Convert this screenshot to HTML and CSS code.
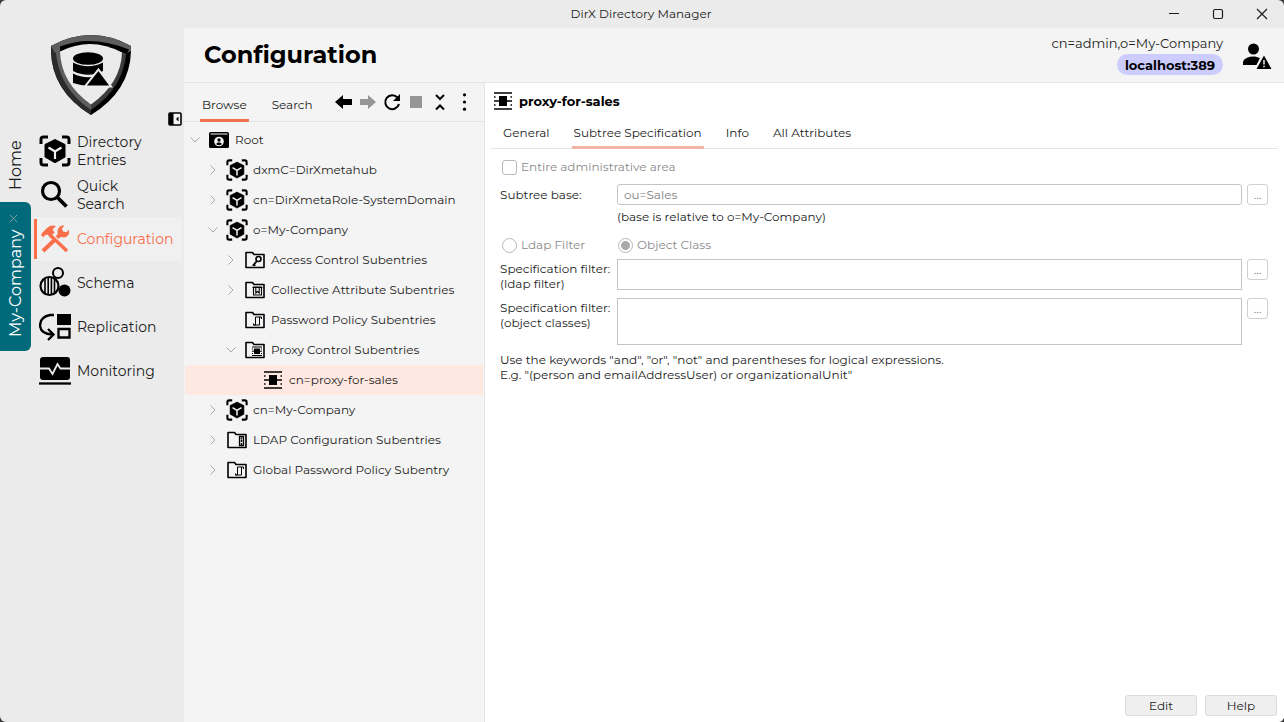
FILE: index.html
```html
<!DOCTYPE html>
<html lang="en">
<head>
<meta charset="utf-8">
<title>DirX Directory Manager</title>
<link rel="stylesheet" href="styles.css">
</head>
<body>
<svg class="sprite" aria-hidden="true">
  <symbol id="cube" viewBox="0 0 32 32">
    <path d="M2 9V4.500Q2 2 4.500 2H9M23 2h4.500Q30 2 30 4.500V9M30 23v4.500Q30 30 27.500 30H23M9 30H4.500Q2 30 2 27.500V23" fill="none" stroke="currentColor" stroke-width="3"/>
    <path d="M16 4.500 26 9.500V22L16 27.800 6 22V9.500z" fill="currentColor" stroke="currentColor" stroke-linejoin="round"/>
    <path d="M9.500 12.500l6.500 4 6.500-4M16 16.500V24" fill="none" stroke="#f2f2f2" stroke-width="2.200"/>
  </symbol>
  <symbol id="chev-right" viewBox="0 0 14 14"><path d="M4.500 2.500 9 7 4.500 11.500" fill="none" stroke="#aaa"/></symbol>
  <symbol id="chev-down" viewBox="0 0 14 14"><path d="M2.500 4.500 7 9 11.500 4.500" fill="none" stroke="#aaa"/></symbol>
  <symbol id="folder" viewBox="0 0 22 22"><path d="M2 3.500h6.500l1.500 2h10v13H2z" fill="none" stroke="currentColor" stroke-width="1.600" stroke-linejoin="round"/></symbol>
  <symbol id="folder-key" viewBox="0 0 22 22"><use href="#folder"/><circle cx="14.500" cy="10" r="2.500" fill="none" stroke="currentColor" stroke-width="1.600"/><path d="M13 12l-3.500 4 2 .5" fill="none" stroke="currentColor" stroke-width="1.800"/></symbol>
  <symbol id="folder-attr" viewBox="0 0 22 22"><use href="#folder"/><path d="M9.500 8h8v8h-8zM8.500 8.500h10M11.800 9v5l1.700-1.500 1.700 1.500V9" fill="none" stroke="currentColor" stroke-width="1.100"/></symbol>
  <symbol id="folder-policy" viewBox="0 0 22 22"><use href="#folder"/><path d="M17.500 10V8H11.500v8H9.500M15.500 8v8h-6v-1.500" fill="none" stroke="currentColor" stroke-width="1"/></symbol>
  <symbol id="folder-proxy" viewBox="0 0 22 22"><use href="#folder"/><path d="M8 8h10M8 16.500h10M8 12.200h10M8 10h1M17 10h1M8 14.500h1M17 14.500h1" stroke="currentColor" stroke-width="1"/><path d="M10 9.500h6v5.500h-6z" fill="currentColor"/></symbol>
  <symbol id="folder-ldap" viewBox="0 0 22 22"><use href="#folder"/><path d="M13.500 7.500h4v9h-4z" fill="none" stroke="currentColor" stroke-width="1.300"/><path d="M15.500 8.500v2M15.500 11v2M15.500 14v2" stroke="currentColor" stroke-width="1.500"/></symbol>
  <symbol id="root" viewBox="0 0 22 22"><rect x="1" y="3" width="20" height="16" rx="1.500" fill="currentColor"/><path d="M2.500 5h17" stroke="#f4f4f4" stroke-width="1.200"/><circle cx="11" cy="12.500" r="4.800" fill="#f4f4f4"/><circle cx="11" cy="11" r="1.700" fill="currentColor"/><path d="M8 15q3-3.500 6 0-3 2.500-6 0z" fill="currentColor"/></symbol>
  <symbol id="proxy" viewBox="0 0 18 18"><path d="M0 1h18M0 17h18M0 9h18" stroke="currentColor" stroke-width="1.600"/><path d="M0 5h1.500M16.500 5H18M0 13h1.500M16.500 13H18" stroke="currentColor" stroke-width="1.500"/><path d="M5 4h8v10H5z" fill="currentColor"/></symbol>
</svg>

<div class="window">
  <header class="titlebar">
    <span class="app-title">DirX Directory Manager</span>
    <div class="window-buttons">
      <button type="button" aria-label="Minimize"><svg viewBox="0 0 12 12"><path d="M1 5.500h10" stroke="currentColor"/></svg></button>
      <button type="button" aria-label="Maximize"><svg viewBox="0 0 12 12"><rect x="1.500" y="1.500" width="9" height="9" rx="1.500" fill="none" stroke="currentColor" stroke-width="1.200"/></svg></button>
      <button type="button" aria-label="Close"><svg viewBox="0 0 12 12"><path d="M1 1l10 10M11 1 1 11" stroke="currentColor" stroke-width="1.200"/></svg></button>
    </div>
  </header>

  <aside class="sidebar">
    <div class="brand">
      <svg class="logo" viewBox="0 0 80 80" role="img" aria-label="DirX">
        <path d="M0 11Q40-11 80 11V16Q79 56 40 80 1 56 0 16z" fill="#000"/>
        <path d="M0 11 6 9 40 74V80Q1 56 0 16z" fill="#2b2b2b"/>
        <path d="M0 11Q40-11 80 11V16L76 18Q40 0 4 18z" fill="#5e5e5e"/>
        <path d="M4.500 12 40 6V75Q6 52 4.500 12z" fill="#5e5e5e"/>
        <path d="M40 6 75.500 14Q74 52 40 75z" fill="#3c3c3c"/>
        <path d="M9 11.500Q40-1 78 14.500L76 19 71 17 9 17z" fill="#000"/>
        <path d="M9 16.500Q40 1 71 17.500 70 48 40 69.500 10 48 9 16.500z" fill="#ebebeb"/>
        <g fill="#000">
          <ellipse cx="37" cy="23.500" rx="15" ry="6.300"/>
          <path d="M22 27.500Q37 35 52 27.500V36Q37 43.500 22 36z"/>
          <path d="M22 38.500Q37 46 52 38.500V50Q37 53 22 48z"/>
        </g>
        <path d="M47.500 34.500 60 51.500H34z" fill="#000" stroke="#ebebeb" stroke-width="2"/>
      </svg>
      <button type="button" class="collapse" aria-label="Collapse navigation">
        <svg viewBox="0 0 14 14"><rect x="1" y="1" width="12" height="12" rx="1" fill="#f4f4f4" stroke="#000" stroke-width="1.600"/><path d="M1 1h4.500v12H1zM10.500 4.500v5L8 7z" fill="#000"/></svg>
      </button>
    </div>
    <div class="side-body">
      <div class="sessions">
        <button type="button" class="session">Home</button>
        <div class="session-open">
          <button type="button" class="session-close" aria-label="Close My-Company"><svg viewBox="0 0 10 10"><path d="M1 1l8 8M9 1 1 9" stroke="#8ba6a9"/></svg></button>
          <button type="button" class="session-name">My-Company</button>
        </div>
      </div>
      <nav class="nav">
        <a href="#entries"><svg viewBox="0 0 32 32"><use href="#cube"/></svg><span>Directory<br>Entries</span></a>
        <a href="#search"><svg viewBox="0 0 32 32"><circle cx="12" cy="12" r="8.500" fill="none" stroke="currentColor" stroke-width="3.200"/><path d="M18.500 18.500l9 9" stroke="currentColor" stroke-width="3.800"/></svg><span>Quick<br>Search</span></a>
        <a href="#configuration" class="active"><svg viewBox="0 0 32 32"><path d="M3.500 9.500 8 5Q12 1.500 17 3L13.500 6.500 15.500 9.500 11 14 8.500 11.500 5.500 12.500 4.500 14.500 2 12z" fill="currentColor"/><path d="M11 12 28 28" stroke="currentColor" stroke-width="3.500"/><path d="M4 28 15 17.500M18 14.500 22 11" stroke="currentColor" stroke-width="4"/><path d="M25.500 2.500 23 5.500l1 3 3.500.8L30 6.500Q31 14 25 14.500 18 14.500 18.500 8 19.500 2 25.500 2.500z" fill="currentColor"/></svg><span>Configuration</span></a>
        <a href="#schema"><svg viewBox="0 0 32 32"><circle cx="10.500" cy="19" r="9" fill="none" stroke="currentColor" stroke-width="2.200"/><path d="M6 12v14M9.200 10v18M12.400 10v18M15.500 12v14" stroke="currentColor" stroke-width="1.600"/><circle cx="19" cy="6" r="5" fill="none" stroke="currentColor" stroke-width="2"/><circle cx="25.500" cy="23.500" r="6" fill="currentColor"/></svg><span>Schema</span></a>
        <a href="#replication"><svg viewBox="0 0 32 32"><path d="M15 4H11Q1 6 1 15 2 23 13 23.500M9 18l5.500 5.500L9 29" fill="none" stroke="currentColor" stroke-width="2.300"/><path d="M18 3h14v11H18z" fill="currentColor"/><path d="M19.500 18h11v8.500h-11z" fill="none" stroke="currentColor" stroke-width="2.300"/></svg><span>Replication</span></a>
        <a href="#monitoring"><svg viewBox="0 0 32 32"><rect x="1" y="2" width="30" height="23" rx="3" fill="currentColor"/><path d="M1 13.500h9l3.500 5.500 5-10 3 4.500H31" fill="none" stroke="#ebebeb" stroke-width="1.800"/><path d="M0 28.500h32" stroke="currentColor" stroke-width="2.300"/></svg><span>Monitoring</span></a>
      </nav>
    </div>
  </aside>

  <main class="main">
    <header class="page-head">
      <h1>Configuration</h1>
      <div class="account">
        <div class="account-text">
          <span>cn=admin,o=My-Company</span>
          <span class="host">localhost:389</span>
        </div>
        <svg class="user" viewBox="0 0 28 28" role="img" aria-label="User warning"><circle cx="10.500" cy="8" r="5.500" fill="currentColor"/><path d="M0 24v-3.500Q3 15 12 15.500L17 17 13.500 24z" fill="currentColor"/><path d="M21 14.500 28.500 28h-15z" fill="currentColor"/><path d="M21 19v4.500M21 24.800v1.500" stroke="#f4f4f4" stroke-width="1.500"/></svg>
      </div>
    </header>

    <section class="browser">
      <div class="browser-bar">
        <div class="tabs browser-tabs" role="tablist">
          <button type="button" role="tab" aria-selected="true">Browse</button>
          <button type="button" role="tab" aria-selected="false">Search</button>
        </div>
        <div class="tools">
          <button type="button" aria-label="Back"><svg viewBox="0 0 18 18"><path d="M0 9 8 2v4h9v6H8v4z" fill="currentColor"/></svg></button>
          <button type="button" aria-label="Forward" disabled><svg viewBox="0 0 18 18"><path d="M17 9 9 2v4H1v6h8v4z" fill="currentColor"/></svg></button>
          <button type="button" aria-label="Refresh"><svg viewBox="0 0 18 18"><path d="M14.500 4.500A7 7 0 1 0 16 11" fill="none" stroke="currentColor" stroke-width="2"/><path d="M17 1v7h-7z" fill="currentColor"/></svg></button>
          <button type="button" aria-label="Stop" disabled><svg viewBox="0 0 18 18"><path d="M3 3h12v12H3z" fill="currentColor"/></svg></button>
          <button type="button" aria-label="Collapse all"><svg viewBox="0 0 18 18"><path d="M5 2l4 4 4-4M5 16.500l4-4 4 4" fill="none" stroke="currentColor" stroke-width="2"/></svg></button>
          <button type="button" aria-label="More"><svg viewBox="0 0 18 18"><g fill="currentColor"><circle cx="9.500" cy="1.800" r="1.600"/><circle cx="9.500" cy="9" r="1.600"/><circle cx="9.500" cy="16.200" r="1.600"/></g></svg></button>
        </div>
      </div>
      <ul class="tree" role="tree">
        <li class="row" role="treeitem"><button type="button" aria-label="Collapse"><svg><use href="#chev-down"/></svg></button><svg class="icon"><use href="#root"/></svg><span>Root</span></li>
        <li class="row d1" role="treeitem"><button type="button" aria-label="Expand"><svg><use href="#chev-right"/></svg></button><svg class="icon"><use href="#cube"/></svg><span>dxmC=DirXmetahub</span></li>
        <li class="row d1" role="treeitem"><button type="button" aria-label="Expand"><svg><use href="#chev-right"/></svg></button><svg class="icon"><use href="#cube"/></svg><span>cn=DirXmetaRole-SystemDomain</span></li>
        <li class="row d1" role="treeitem"><button type="button" aria-label="Collapse"><svg><use href="#chev-down"/></svg></button><svg class="icon"><use href="#cube"/></svg><span>o=My-Company</span></li>
        <li class="row d2" role="treeitem"><button type="button" aria-label="Expand"><svg><use href="#chev-right"/></svg></button><svg class="icon"><use href="#folder-key"/></svg><span>Access Control Subentries</span></li>
        <li class="row d2" role="treeitem"><button type="button" aria-label="Expand"><svg><use href="#chev-right"/></svg></button><svg class="icon"><use href="#folder-attr"/></svg><span>Collective Attribute Subentries</span></li>
        <li class="row d2 leaf" role="treeitem"><svg class="icon"><use href="#folder-policy"/></svg><span>Password Policy Subentries</span></li>
        <li class="row d2" role="treeitem"><button type="button" aria-label="Collapse"><svg><use href="#chev-down"/></svg></button><svg class="icon"><use href="#folder-proxy"/></svg><span>Proxy Control Subentries</span></li>
        <li class="row d3 leaf selected" role="treeitem" aria-selected="true"><svg class="icon small"><use href="#proxy"/></svg><span>cn=proxy-for-sales</span></li>
        <li class="row d1" role="treeitem"><button type="button" aria-label="Expand"><svg><use href="#chev-right"/></svg></button><svg class="icon"><use href="#cube"/></svg><span>cn=My-Company</span></li>
        <li class="row d1" role="treeitem"><button type="button" aria-label="Expand"><svg><use href="#chev-right"/></svg></button><svg class="icon"><use href="#folder-ldap"/></svg><span>LDAP Configuration Subentries</span></li>
        <li class="row d1" role="treeitem"><button type="button" aria-label="Expand"><svg><use href="#chev-right"/></svg></button><svg class="icon"><use href="#folder-policy"/></svg><span>Global Password Policy Subentry</span></li>
      </ul>
    </section>

    <section class="detail">
      <h2><svg><use href="#proxy"/></svg>proxy-for-sales</h2>
      <div class="tabs detail-tabs" role="tablist">
        <button type="button" role="tab" aria-selected="false">General</button>
        <button type="button" role="tab" aria-selected="true">Subtree Specification</button>
        <button type="button" role="tab" aria-selected="false">Info</button>
        <button type="button" role="tab" aria-selected="false">All Attributes</button>
      </div>
      <form class="form">
        <label class="option wide"><input type="checkbox" disabled>Entire administrative area</label>
        <label class="name single" for="base">Subtree base:</label>
        <input class="field" id="base" type="text" value="ou=Sales" disabled>
        <button type="button" class="pick" aria-label="Choose subtree base" disabled>...</button>
        <p class="hint">(base is relative to o=My-Company)</p>
        <label class="option"><input type="radio" name="kind" disabled>Ldap Filter</label>
        <label class="option second"><input type="radio" name="kind" checked disabled>Object Class</label>
        <label class="name" for="ldap">Specification filter:<br>(ldap filter)</label>
        <textarea class="field" id="ldap" disabled></textarea>
        <button type="button" class="pick" aria-label="Edit ldap filter" disabled>...</button>
        <label class="name gap" for="classes">Specification filter:<br>(object classes)</label>
        <textarea class="field tall gap" id="classes" disabled></textarea>
        <button type="button" class="pick gap" aria-label="Edit object classes" disabled>...</button>
        <p class="note">Use the keywords "and", "or", "not" and parentheses for logical expressions.<br>E.g. "(person and emailAddressUser) or organizationalUnit"</p>
      </form>
      <footer class="actions">
        <button type="button">Edit</button>
        <button type="button">Help</button>
      </footer>
    </section>
  </main>
</div>
</body>
</html>
```

FILE: styles.css
```css
* { box-sizing: border-box; }
body {
  margin: 0;
  background: #3a3a3a;
  color: #1c1c1c;
  font: 12px/16px Montserrat, Inter, "Open Sans", sans-serif;
}
h1, h2, p, ul { margin: 0; padding: 0; }
button {
  padding: 0;
  border: 0;
  background: none;
  color: inherit;
  font: inherit;
}
svg { display: block; flex: none; }
.sprite { position: absolute; width: 0; height: 0; }

.window {
  display: grid;
  grid-template: 28px 1fr / 184px 1fr;
  min-height: 100vh;
  overflow: hidden;
  border-radius: 6px;
  background: #ebebeb;
}
.titlebar {
  grid-column: 1 / -1;
  display: grid;
  grid-template-columns: 1fr auto 1fr;
  align-items: center;
  padding-right: 6px;
}
.app-title { grid-column: 2; padding-left: 4px; }
.window-buttons { display: flex; justify-content: flex-end; gap: 12px; }
.window-buttons button { display: grid; place-items: center; width: 32px; height: 28px; }
.window-buttons svg { width: 12px; height: 12px; }

/* Sidebar */
.brand {
  display: grid;
  grid-template-columns: 1fr 80px 1fr;
  align-items: end;
  height: 101px;
  padding: 0 2px 3px 0;
}
.logo { grid-column: 2; width: 80px; height: 80px; align-self: start; margin-top: 7px; }
.collapse { justify-self: end; }
.collapse svg { width: 14px; height: 14px; }
.side-body { display: grid; grid-template-columns: 31px 1fr; gap: 3px; align-items: start; }
.sessions { display: flex; flex-direction: column; font-size: 16px; line-height: 31px; }
.session, .session-name { writing-mode: vertical-rl; transform: rotate(180deg); width: 31px; }
.session { height: 73px; }
.session-open {
  height: 149px;
  padding: 10px 0 8px;
  border-radius: 0 6px 6px 0;
  background: #00697a;
  color: #fff;
}
.session-close { display: grid; place-items: center; width: 27px; height: 12px; }
.session-close svg { width: 9px; height: 9px; }
.session-name { height: 118px; }

.nav { display: flex; flex-direction: column; padding-right: 2px; font-size: 14px; line-height: 18px; }
.nav a {
  display: flex;
  align-items: center;
  gap: 6px;
  height: 44px;
  padding-left: 2px;
  border-left: 3px solid transparent;
  color: #000;
  text-decoration: none;
}
.nav svg { width: 32px; height: 32px; }
.nav .active {
  border-radius: 2px;
  background: linear-gradient(#f86f4a, #f86f4a) left center / 3px 40px no-repeat border-box, #f0f0f0;
  color: #f86f4a;
}
.nav span { color: #1c1c1c; }
.nav .active span { color: inherit; }

/* Page header */
.main {
  display: grid;
  grid-template: 54px 1fr / 301px 1fr;
  min-width: 0;
  background: #f4f4f4;
}
.page-head {
  grid-column: 1 / -1;
  display: flex;
  align-items: center;
  justify-content: space-between;
  padding: 0 13px 0 20px;
}
h1 { color: #000; font-size: 24px; line-height: 32px; }
.account { display: flex; align-items: center; gap: 20px; font-size: 13px; }
.account-text { display: flex; flex-direction: column; align-items: flex-end; gap: 3px; }
.host {
  padding: 3px 8px 2px;
  border-radius: 11px;
  background: #ccccff;
  color: #000;
  font-weight: bold;
}
.user { width: 28px; height: 28px; color: #000; overflow: visible; }

/* Tabs */
.tabs { display: flex; gap: 20px; }
.tabs button { padding: 0 2px; border-bottom: 3px solid transparent; border-radius: 1px; }

/* Tree panel */
.browser { border: solid #e4e4e4; border-width: 1px 1px 0 0; }
.browser-bar {
  display: flex;
  justify-content: space-between;
  height: 39px;
  padding: 0 11px 0 16px;
  border-bottom: 1px solid #e4e4e4;
}
.browser-tabs { gap: 21px; }
.browser-tabs button { height: 39px; padding-top: 8px; }
.browser-tabs [aria-selected="true"] { border-bottom-color: #f0714c; }
.tools { display: flex; gap: 6px; padding-top: 10px; color: #000; }
.tools button { width: 18px; height: 18px; }
.tools button:disabled { color: #959595; }
.tools svg { width: 18px; height: 18px; }
.tree { padding: 3px 1px 0; list-style: none; }
.row { display: flex; align-items: center; height: 30px; padding-left: 3px; border-radius: 2px; }
.row button { margin-right: 6px; }
.row button svg { width: 14px; height: 14px; }
.icon { width: 22px; height: 22px; margin-right: 5px; color: #000; }
.icon.small { width: 18px; height: 18px; margin-right: 7px; }
.d1 { padding-left: 21px; }
.d2 { padding-left: 39px; }
.d3 { padding-left: 57px; }
.leaf .icon { margin-left: 20px; }
.leaf .icon.small { margin-left: 22px; }
.selected { background: #fee8e1; }

/* Detail panel */
.detail {
  display: flex;
  flex-direction: column;
  min-width: 0;
  padding: 0 6px;
  border-top: 1px solid #e4e4e4;
  background: #fff;
}
h2 {
  display: flex;
  align-items: center;
  gap: 7px;
  height: 36px;
  padding-left: 3px;
  color: #000;
  font-size: 13px;
  line-height: 16px;
}
h2 svg { width: 18px; height: 18px; }
.detail-tabs { height: 30px; padding-left: 10px; border-bottom: 1px solid #e4e4e4; }
.detail-tabs button { height: 30px; }
.detail-tabs [aria-selected="true"] { border-bottom-color: #f3b5a4; }
.form {
  display: grid;
  grid-template-columns: 117px 1fr 21px;
  align-items: start;
  padding: 8px 10px 0 9px;
}
.option { display: flex; align-items: center; gap: 4px; height: 20px; padding-left: 2px; color: #8a8a8a; }
.option input {
  appearance: none;
  width: 15px;
  height: 15px;
  margin: 0;
  border: 1px solid #b8b8b8;
  border-radius: 3px;
  background: #fff;
}
.option [type="radio"] { border-radius: 50%; }
.option [type="radio"]:checked { background: radial-gradient(circle, #aaa 4px, #fff 5px); }
.wide { grid-column: 1 / -1; margin-bottom: 7px; }
.second { grid-column: 2 / -1; padding-left: 1px; }
.single { line-height: 21px; }
.field {
  width: calc(100% - 5px);
  height: 21px;
  padding: 0 6px;
  border: 1px solid #c4c4c4;
  border-radius: 3px;
  background: #fff;
  color: #808080;
  font: inherit;
}
textarea.field { display: block; height: 31px; border-radius: 0; resize: none; }
textarea.tall { height: 47px; }
.pick {
  height: 21px;
  border: 1px solid #d0d0d0;
  border-radius: 3px;
  color: #808080;
}
.hint { grid-column: 2 / -1; margin: 4px 0 10px; }
.option:has([type="radio"]) { margin-bottom: 4px; }
.name:not(.single) { padding-top: 2px; line-height: 15px; }
.gap { margin-top: 7px; }
.note { grid-column: 1 / -1; margin-top: 7px; line-height: 15px; }
.actions { display: flex; justify-content: flex-end; gap: 8px; margin-top: auto; padding: 0 1px 6px; }
.actions button {
  width: 72px;
  height: 21px;
  border: 1px solid #dcdcdc;
  border-radius: 3px;
  background: #efefef;
}
```
